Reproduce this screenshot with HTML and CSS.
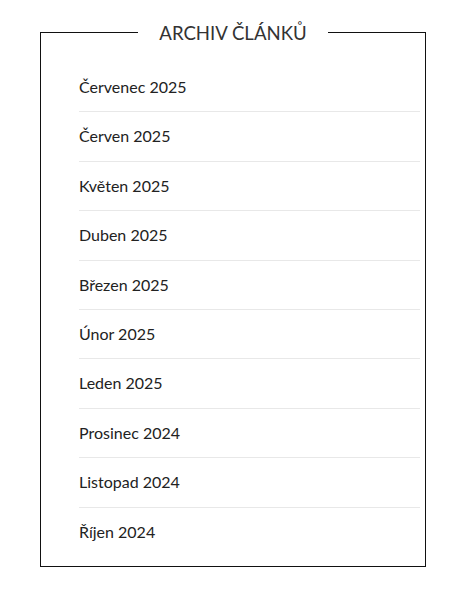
FILE: index.html
```html
<!DOCTYPE html>
<html lang="cs">
<head>
    <meta charset="UTF-8">
    <title>Archiv článků</title>
    <link rel="stylesheet" href="styles.css">
</head>
<body>
    <div class="widget">
        <h2 class="widget-title">ARCHIV ČLÁNKŮ</h2>
        <ul class="archive-list">
            <li><a href="#">Červenec 2025</a></li>
            <li><a href="#">Červen 2025</a></li>
            <li><a href="#">Květen 2025</a></li>
            <li><a href="#">Duben 2025</a></li>
            <li><a href="#">Březen 2025</a></li>
            <li><a href="#">Únor 2025</a></li>
            <li><a href="#">Leden 2025</a></li>
            <li><a href="#">Prosinec 2024</a></li>
            <li><a href="#">Listopad 2024</a></li>
            <li><a href="#">Říjen 2024</a></li>
        </ul>
    </div>
</body>
</html>
```

FILE: styles.css
```css
body {
    margin: 0;
    padding: 32px 37px 0 40px;
    background: #fff;
    font-family: Lato, "Liberation Sans", sans-serif;
}
.widget {
    border: 1px solid #111;
    padding: 0 5px 10px 5px;
}
.widget-title {
    width: fit-content;
    margin: -13px auto 0;
    padding: 0 21px;
    background: #fff;
    font-size: 18.6px;
    font-weight: 400;
    line-height: 26px;
    color: #333;
}
.archive-list {
    list-style: none;
    margin: 17px 0 0 33px;
    padding: 0;
}
.archive-list li {
    padding: 12px 0;
    font-size: 16px;
    line-height: 24.4px;
    border-bottom: 1px solid #e8e8e8;
}
.archive-list li:last-child {
    border-bottom: none;
}
.archive-list a {
    color: #222;
    text-decoration: none;
}
```
